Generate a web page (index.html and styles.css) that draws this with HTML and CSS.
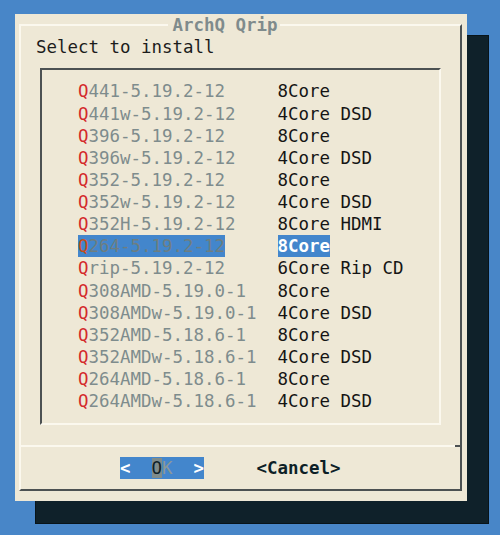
FILE: index.html
```html
<!DOCTYPE html>
<html>
<head>
<meta charset="utf-8">
<title>ArchQ Qrip</title>
<link rel="stylesheet" href="styles.css">
</head>
<body>
<div class="dialog">
  <div class="frame">
    <div class="title-row"><span class="title">ArchQ Qrip</span></div>
    <div class="prompt">Select to install</div>
    <div class="menu">
      <div class="item"><span class="tag"><span class="hot">Q</span>441-5.19.2-12</span><span class="desc">8Core</span></div>
      <div class="item"><span class="tag"><span class="hot">Q</span>441w-5.19.2-12</span><span class="desc">4Core DSD</span></div>
      <div class="item"><span class="tag"><span class="hot">Q</span>396-5.19.2-12</span><span class="desc">8Core</span></div>
      <div class="item"><span class="tag"><span class="hot">Q</span>396w-5.19.2-12</span><span class="desc">4Core DSD</span></div>
      <div class="item"><span class="tag"><span class="hot">Q</span>352-5.19.2-12</span><span class="desc">8Core</span></div>
      <div class="item"><span class="tag"><span class="hot">Q</span>352w-5.19.2-12</span><span class="desc">4Core DSD</span></div>
      <div class="item"><span class="tag"><span class="hot">Q</span>352H-5.19.2-12</span><span class="desc">8Core HDMI</span></div>
      <div class="item sel"><span class="tag"><span class="hot">Q</span>264-5.19.2-12</span><span class="desc">8Core</span></div>
      <div class="item"><span class="tag"><span class="hot">Q</span>rip-5.19.2-12</span><span class="desc">6Core Rip CD</span></div>
      <div class="item"><span class="tag"><span class="hot">Q</span>308AMD-5.19.0-1</span><span class="desc">8Core</span></div>
      <div class="item"><span class="tag"><span class="hot">Q</span>308AMDw-5.19.0-1</span><span class="desc">4Core DSD</span></div>
      <div class="item"><span class="tag"><span class="hot">Q</span>352AMD-5.18.6-1</span><span class="desc">8Core</span></div>
      <div class="item"><span class="tag"><span class="hot">Q</span>352AMDw-5.18.6-1</span><span class="desc">4Core DSD</span></div>
      <div class="item"><span class="tag"><span class="hot">Q</span>264AMD-5.18.6-1</span><span class="desc">8Core</span></div>
      <div class="item"><span class="tag"><span class="hot">Q</span>264AMDw-5.18.6-1</span><span class="desc">4Core DSD</span></div>
    </div>
    <div class="sep"></div>
    <div class="buttons"><span class="btn btn-ok"><b class="arrow">&lt;</b>  <span class="ok-o">O</span><span class="ok-k">K</span>  <b class="arrow">&gt;</b></span><span class="btn btn-cancel">&lt;Cancel&gt;</span></div>
  </div>
</div>
</body>
</html>
```

FILE: styles.css
```css
html, body {
  margin: 0;
}

body {
  background: #4886c8;
  padding: 14px 0 0 15px;
  height: 535px;
  box-sizing: border-box;
  overflow: hidden;
  font-family: "DejaVu Sans Mono", monospace;
  font-size: 17.44px;
  line-height: 22.14px;
}

.dialog {
  width: 451.5px;
  height: 487px;
  box-sizing: border-box;
  padding: 10px 4.25px;
  background: #eee8d6;
  box-shadow: 21px 22px 0 0 #0f212a, 21px 22px 0 1px #08141a;
}

.frame {
  height: 100%;
  box-sizing: border-box;
  border: 2px solid;
  border-color: #fbf8ee #4c5152 #4c5152 #fbf8ee;
}

.title-row {
  display: flex;
  height: 22.14px;
  margin-top: -12px;
  padding-left: 146.25px;
}

.title {
  padding: 0 3px 0 5px;
  background: #eee8d6;
  color: #7f8b8c;
  font-weight: bold;
}

.prompt {
  height: 22.14px;
  padding-left: 14.75px;
  color: #1c1c1c;
}

.menu {
  width: 401px;
  height: 356.25px;
  box-sizing: border-box;
  margin: 10.07px 0 0 19px;
  padding: 10.07px 0 0 35.75px;
  border: 2px solid;
  border-color: #4c5152 #fbf8ee #fbf8ee #4c5152;
}

.item {
  display: grid;
  grid-template-columns: 199.5px auto;
  justify-items: start;
  height: 22.14px;
}

.tag {
  color: #7e8c8d;
}

.hot {
  color: #d42a2c;
}

.desc {
  color: #151515;
}

.sel .tag {
  background: #4386cc;
  color: #6e7e80;
}

.sel .hot {
  color: #cb4b16;
}

.sel .desc {
  background: #4386cc;
  color: #ffffff;
  font-weight: bold;
}

.sep {
  height: 2px;
  margin-top: 20.1px;
  background: linear-gradient(to right, #fbf8ee calc(100% - 5px), #4c5152 0);
}

.buttons {
  display: flex;
  gap: 52.5px;
  height: 22.14px;
  margin-top: 10.1px;
  padding-left: 98.75px;
  white-space: pre;
}

.btn-ok {
  background: #4386cc;
}

.arrow {
  color: #ffffff;
  font-weight: bold;
}

.ok-o {
  background: #7f8c8c;
  color: #0f2128;
}

.ok-k {
  color: #8a9898;
}

.btn-cancel {
  color: #0d1f27;
  font-weight: bold;
}
```
